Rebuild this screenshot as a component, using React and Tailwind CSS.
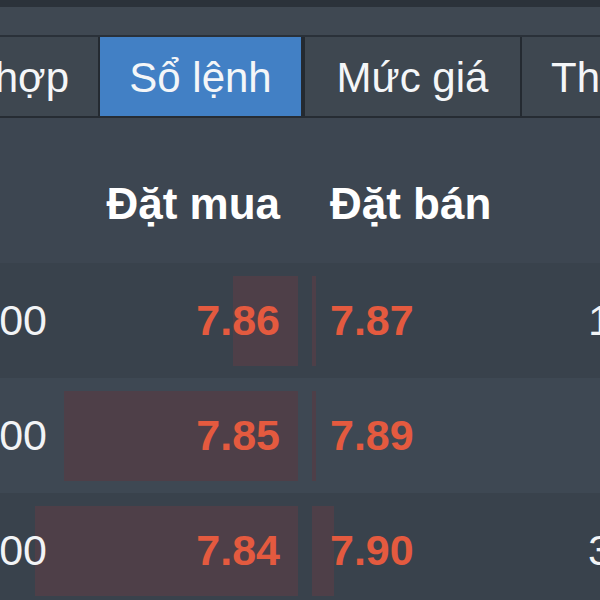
import React from 'react';

const tabs = [
  { label: 'Tổng hợp', width: 'w-[98px] justify-end', active: false },
  { label: 'Sổ lệnh', width: 'w-[205px] justify-center', active: true },
  { label: 'Mức giá', width: 'w-[217px] justify-center', active: false },
  { label: 'Thống kê', width: 'flex-1 justify-start', active: false },
];

const rows = [
  { bidVol: '12,500', bid: '7.86', ask: '7.87', askVol: '15,200', bidBar: 65, askBar: 4, dark: true },
  { bidVol: '48,000', bid: '7.85', ask: '7.89', askVol: '', bidBar: 234, askBar: 4, dark: false },
  { bidVol: '53,200', bid: '7.84', ask: '7.90', askVol: '31,700', bidBar: 263, askBar: 22, dark: true },
];

const App = () => {
  return (
    <div
      className="w-[600px] h-[600px] overflow-hidden bg-[#3c4651] text-white"
      style={{ fontFamily: '"Liberation Sans", Arial, sans-serif' }}
    >
      {/* Top chrome */}
      <div className="h-[7px] bg-[#2b323a]" />
      <div className="h-[30px] bg-[#3f4852] border-b-2 border-[#2a3139]" />

      {/* Tabs */}
      <div className="flex h-[81px] bg-[#3e4750] border-b-2 border-[#262c33]">
        {tabs.map((tab, i) => (
          <div
            key={tab.label}
            className={`flex shrink-0 items-center overflow-hidden px-[29px] pt-[3px] ${tab.width} ${
              i > 0 ? 'border-l-2 border-[#242a31]' : ''
            } ${tab.active ? 'bg-[#4280c5] border-r-2' : ''}`}
          >
            <span className="shrink-0 whitespace-nowrap text-[42px] leading-none text-[#f4f6f8]">
              {tab.label}
            </span>
          </div>
        ))}
      </div>

      {/* Column headers */}
      <div className="flex h-[145px] items-end pb-[37px] bg-[#3d4651] text-[44px] font-bold leading-none">
        <div className="w-[47px] shrink-0" />
        <div className="w-[251px] shrink-0 pr-[18px] text-right whitespace-nowrap">Đặt mua</div>
        <div className="w-[14px] shrink-0" />
        <div className="w-[248px] shrink-0 pl-[18px] whitespace-nowrap">Đặt bán</div>
      </div>

      {/* Order book rows */}
      {rows.map((row) => (
        <div
          key={row.bid}
          className={`flex h-[115px] items-center text-[43px] leading-none ${
            row.dark ? 'bg-[#39424c]' : 'bg-[#3e4853]'
          }`}
        >
          <div className="relative z-10 flex w-[47px] shrink-0 justify-end">
            <span className="shrink-0 whitespace-nowrap text-[#f2f4f6]">{row.bidVol}</span>
          </div>
          <div className="relative flex h-full w-[251px] shrink-0 items-center justify-end pr-[18px]">
            <div
              className="absolute right-0 top-[13px] bottom-[12px] bg-[#4e3f48]"
              style={{ width: row.bidBar }}
            />
            <span className="relative font-bold text-[#e45a3f]">{row.bid}</span>
          </div>
          <div className="w-[14px] shrink-0" />
          <div className="relative flex h-full w-[248px] shrink-0 items-center pl-[18px]">
            <div
              className="absolute left-0 top-[13px] bottom-[12px] bg-[#4e3f48]"
              style={{ width: row.askBar }}
            />
            <span className="relative font-bold text-[#e45a3f]">{row.ask}</span>
          </div>
          <div className="w-[200px] shrink-0 pl-[28px] whitespace-nowrap text-[#f2f4f6]">
            {row.askVol}
          </div>
        </div>
      ))}
    </div>
  );
};

export default App;
